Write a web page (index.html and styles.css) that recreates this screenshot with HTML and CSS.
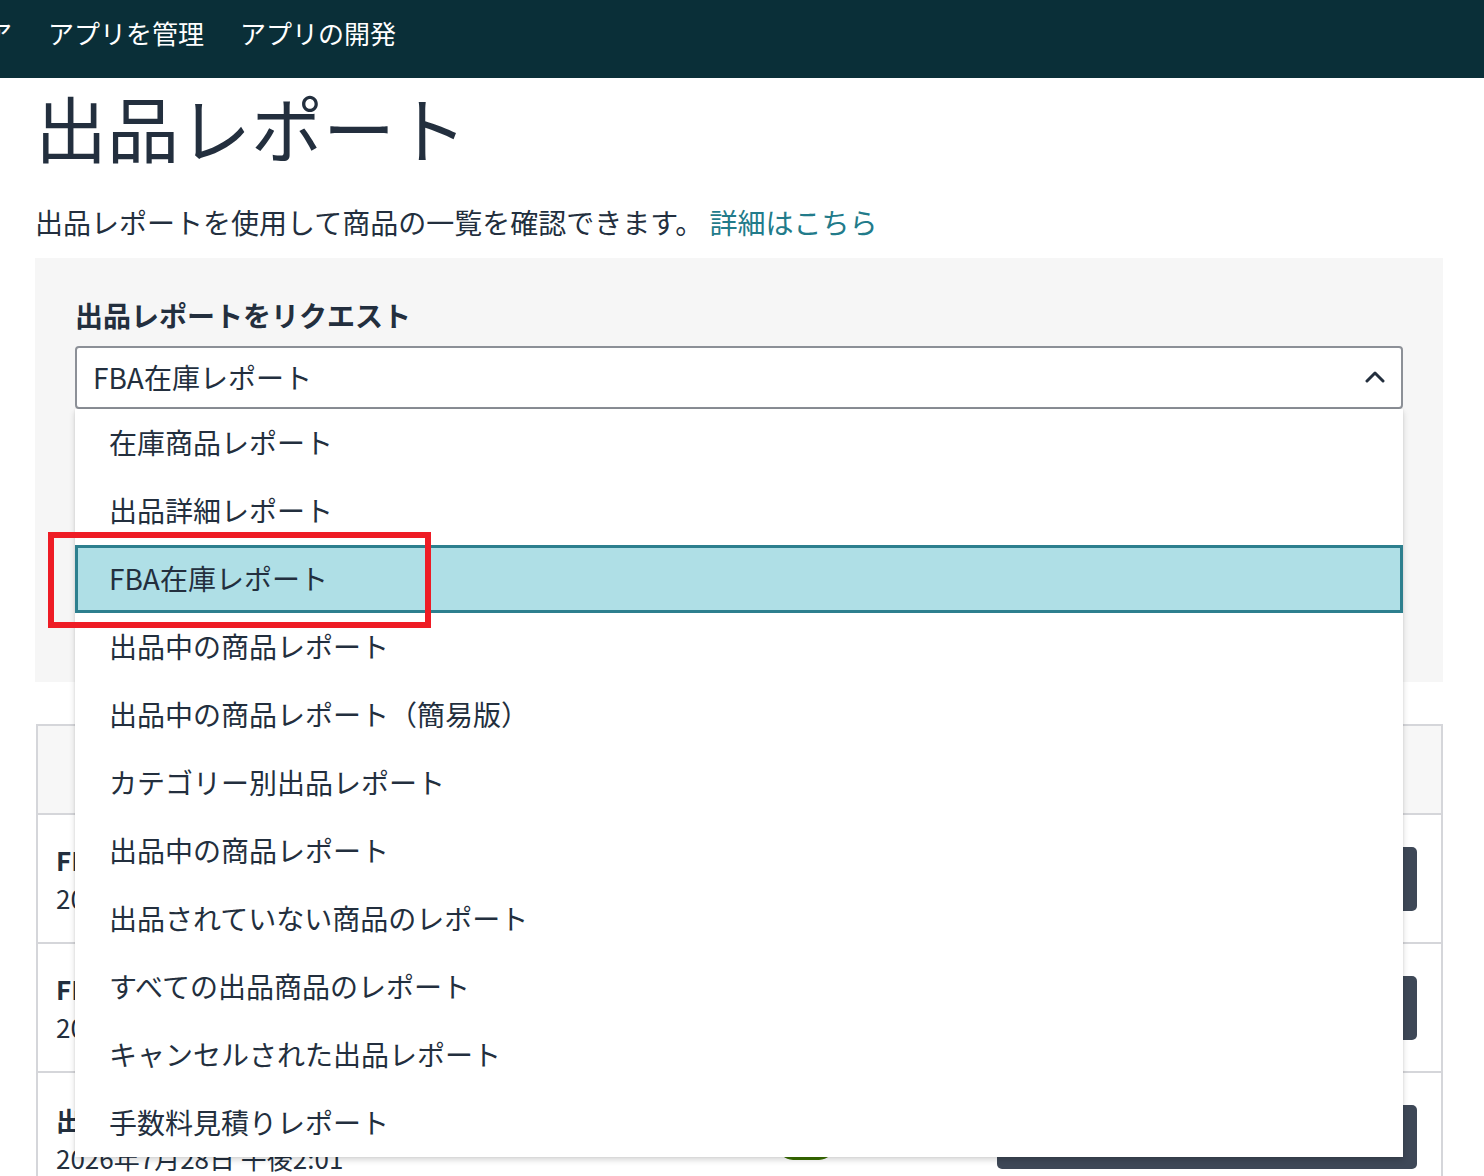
FILE: index.html
```html
<!DOCTYPE html>
<html lang="ja">
<head>
<meta charset="utf-8">
<title>出品レポート</title>
<link rel="stylesheet" href="styles.css">
</head>
<body>
<nav class="nav">
  <span class="nav-item nav-first">ストア</span>
  <span class="nav-item">アプリを管理</span>
  <span class="nav-item">アプリの開発</span>
</nav>
<main class="main">
  <h1 class="title">出品レポート</h1>
  <p class="desc">出品レポートを使用して商品の一覧を確認できます。<a class="link" href="#">詳細はこちら</a></p>
  <section class="panel">
    <div class="label">出品レポートをリクエスト</div>
    <div class="select-wrap">
      <div class="select">
        <span>FBA在庫レポート</span>
        <svg class="chev" width="20" height="13" viewBox="0 0 20 13"><path d="M2 11 L10 3 L18 11" fill="none" stroke="#232f3e" stroke-width="3" stroke-linecap="round" stroke-linejoin="round"/></svg>
      </div>
      <ul class="menu">
        <li class="opt">在庫商品レポート</li>
        <li class="opt">出品詳細レポート</li>
        <li class="opt opt-active">FBA在庫レポート</li>
        <li class="opt">出品中の商品レポート</li>
        <li class="opt">出品中の商品レポート（簡易版）</li>
        <li class="opt">カテゴリー別出品レポート</li>
        <li class="opt">出品中の商品レポート</li>
        <li class="opt">出品されていない商品のレポート</li>
        <li class="opt">すべての出品商品のレポート</li>
        <li class="opt">キャンセルされた出品レポート</li>
        <li class="opt">手数料見積りレポート</li>
        <li class="annot"></li>
      </ul>
    </div>
    <div class="panel-actions"><span class="req-btn">リクエスト</span></div>
  </section>
  <section class="card">
    <div class="card-head"><span class="head-cell">ステータス</span></div>
    <div class="row">
      <div class="info"><div class="r-title">FBA在庫レポート</div><div class="r-date">2026年7月28日 午後3:12</div></div>
      <span class="badge">完了</span>
      <span class="dl-btn">ダウンロード</span>
    </div>
    <div class="row">
      <div class="info"><div class="r-title">FBA在庫レポート</div><div class="r-date">2026年7月28日 午後2:45</div></div>
      <span class="badge">完了</span>
      <span class="dl-btn">ダウンロード</span>
    </div>
    <div class="row row-last">
      <div class="info"><div class="r-title">出品中の商品レポート</div><div class="r-date">2026年7月28日 午後2:01</div></div>
      <span class="badge">完了</span>
      <span class="dl-btn">ダウンロード</span>
    </div>
  </section>
</main>
</body>
</html>
```
FILE: styles.css
```css
html, body {
  margin: 0;
  padding: 0;
  background: #ffffff;
}
body {
  font-family: "Noto Sans CJK JP", "Noto Sans", sans-serif;
  color: #232f3e;
  overflow: hidden;
}
.nav {
  height: 78px;
  box-sizing: border-box;
  background: #0a2f38;
  display: flex;
  align-items: flex-start;
  gap: 36px;
  padding-top: 14px;
  overflow: hidden;
}
.nav-item {
  color: #ffffff;
  font-size: 26px;
  line-height: 38px;
  white-space: nowrap;
}
.nav-first {
  margin-left: -66px;
}
.main {
  padding: 0 41px 0 35px;
}
.title {
  margin: 5px 0 0 0;
  font-size: 72px;
  font-weight: 400;
  line-height: 86px;
  color: #232f3e;
}
.desc {
  margin: 33px 0 0 0;
  font-size: 28px;
  line-height: 40px;
}
.link {
  color: #227b8a;
  text-decoration: none;
  margin-left: 6px;
}
.panel {
  margin-top: 16px;
  background: #f6f6f6;
  padding: 37px 40px 40px 40px;
  height: 424px;
  box-sizing: border-box;
}
.label {
  font-size: 28px;
  font-weight: 700;
  line-height: 40px;
}
.select-wrap {
  position: relative;
  margin-top: 11px;
  z-index: 5;
}
.select {
  height: 63px;
  box-sizing: border-box;
  border: 2px solid #8c9097;
  border-radius: 4px;
  background: #ffffff;
  display: flex;
  align-items: center;
  justify-content: space-between;
  padding: 0 16px 2px 16px;
  font-size: 28px;
}
.chev {
  display: block;
}
.menu {
  position: absolute;
  top: 100%;
  left: 0;
  right: 0;
  margin: 0;
  padding: 0;
  list-style: none;
  background: #ffffff;
  box-shadow: 0 3px 6px rgba(0, 0, 0, 0.16), 0 0 2px rgba(0, 0, 0, 0.08);
}
.opt {
  height: 68px;
  box-sizing: border-box;
  display: flex;
  align-items: center;
  padding: 0 0 2px 34px;
  font-size: 28px;
  color: #232f3e;
}
.opt-active {
  background: #afdfe6;
  border: 3px solid #2d7f8e;
  padding-left: 31px;
}
.annot {
  position: absolute;
  left: -27px;
  top: 123px;
  width: 383px;
  height: 96px;
  box-sizing: border-box;
  border: 6px solid #ee1c25;
}
.panel-actions {
  margin-top: 40px;
}
.req-btn {
  display: inline-block;
  font-size: 26px;
  padding: 12px 24px;
  background: #ffffff;
  border-radius: 4px;
}
.card {
  margin-top: 42px;
  margin-left: 1px;
  border: 2px solid #d5d6da;
  border-bottom: none;
}
.card-head {
  height: 87px;
  background: #f7f7f7;
  display: flex;
  align-items: center;
  padding-left: 740px;
  font-size: 26px;
  font-weight: 700;
}
.row {
  height: 129px;
  box-sizing: border-box;
  border-top: 2px solid #d5d6da;
  display: flex;
  align-items: center;
  padding: 0 24px 0 18px;
}
.info {
  width: 722px;
  font-size: 26px;
  line-height: 38px;
  white-space: nowrap;
  overflow: hidden;
}
.row-last .info {
  margin-top: 4px;
}
.r-title {
  font-weight: 700;
}
.badge {
  display: inline-block;
  width: 56px;
  height: 30px;
  line-height: 30px;
  border-radius: 15px;
  background: #3a7000;
  color: #ffffff;
  font-size: 18px;
  text-align: center;
  margin-top: 16px;
}
.dl-btn {
  margin-left: auto;
  width: 420px;
  height: 64px;
  border-radius: 5px;
  background: #3e4857;
  color: #ffffff;
  font-size: 24px;
  display: flex;
  align-items: center;
  justify-content: center;
}
```
